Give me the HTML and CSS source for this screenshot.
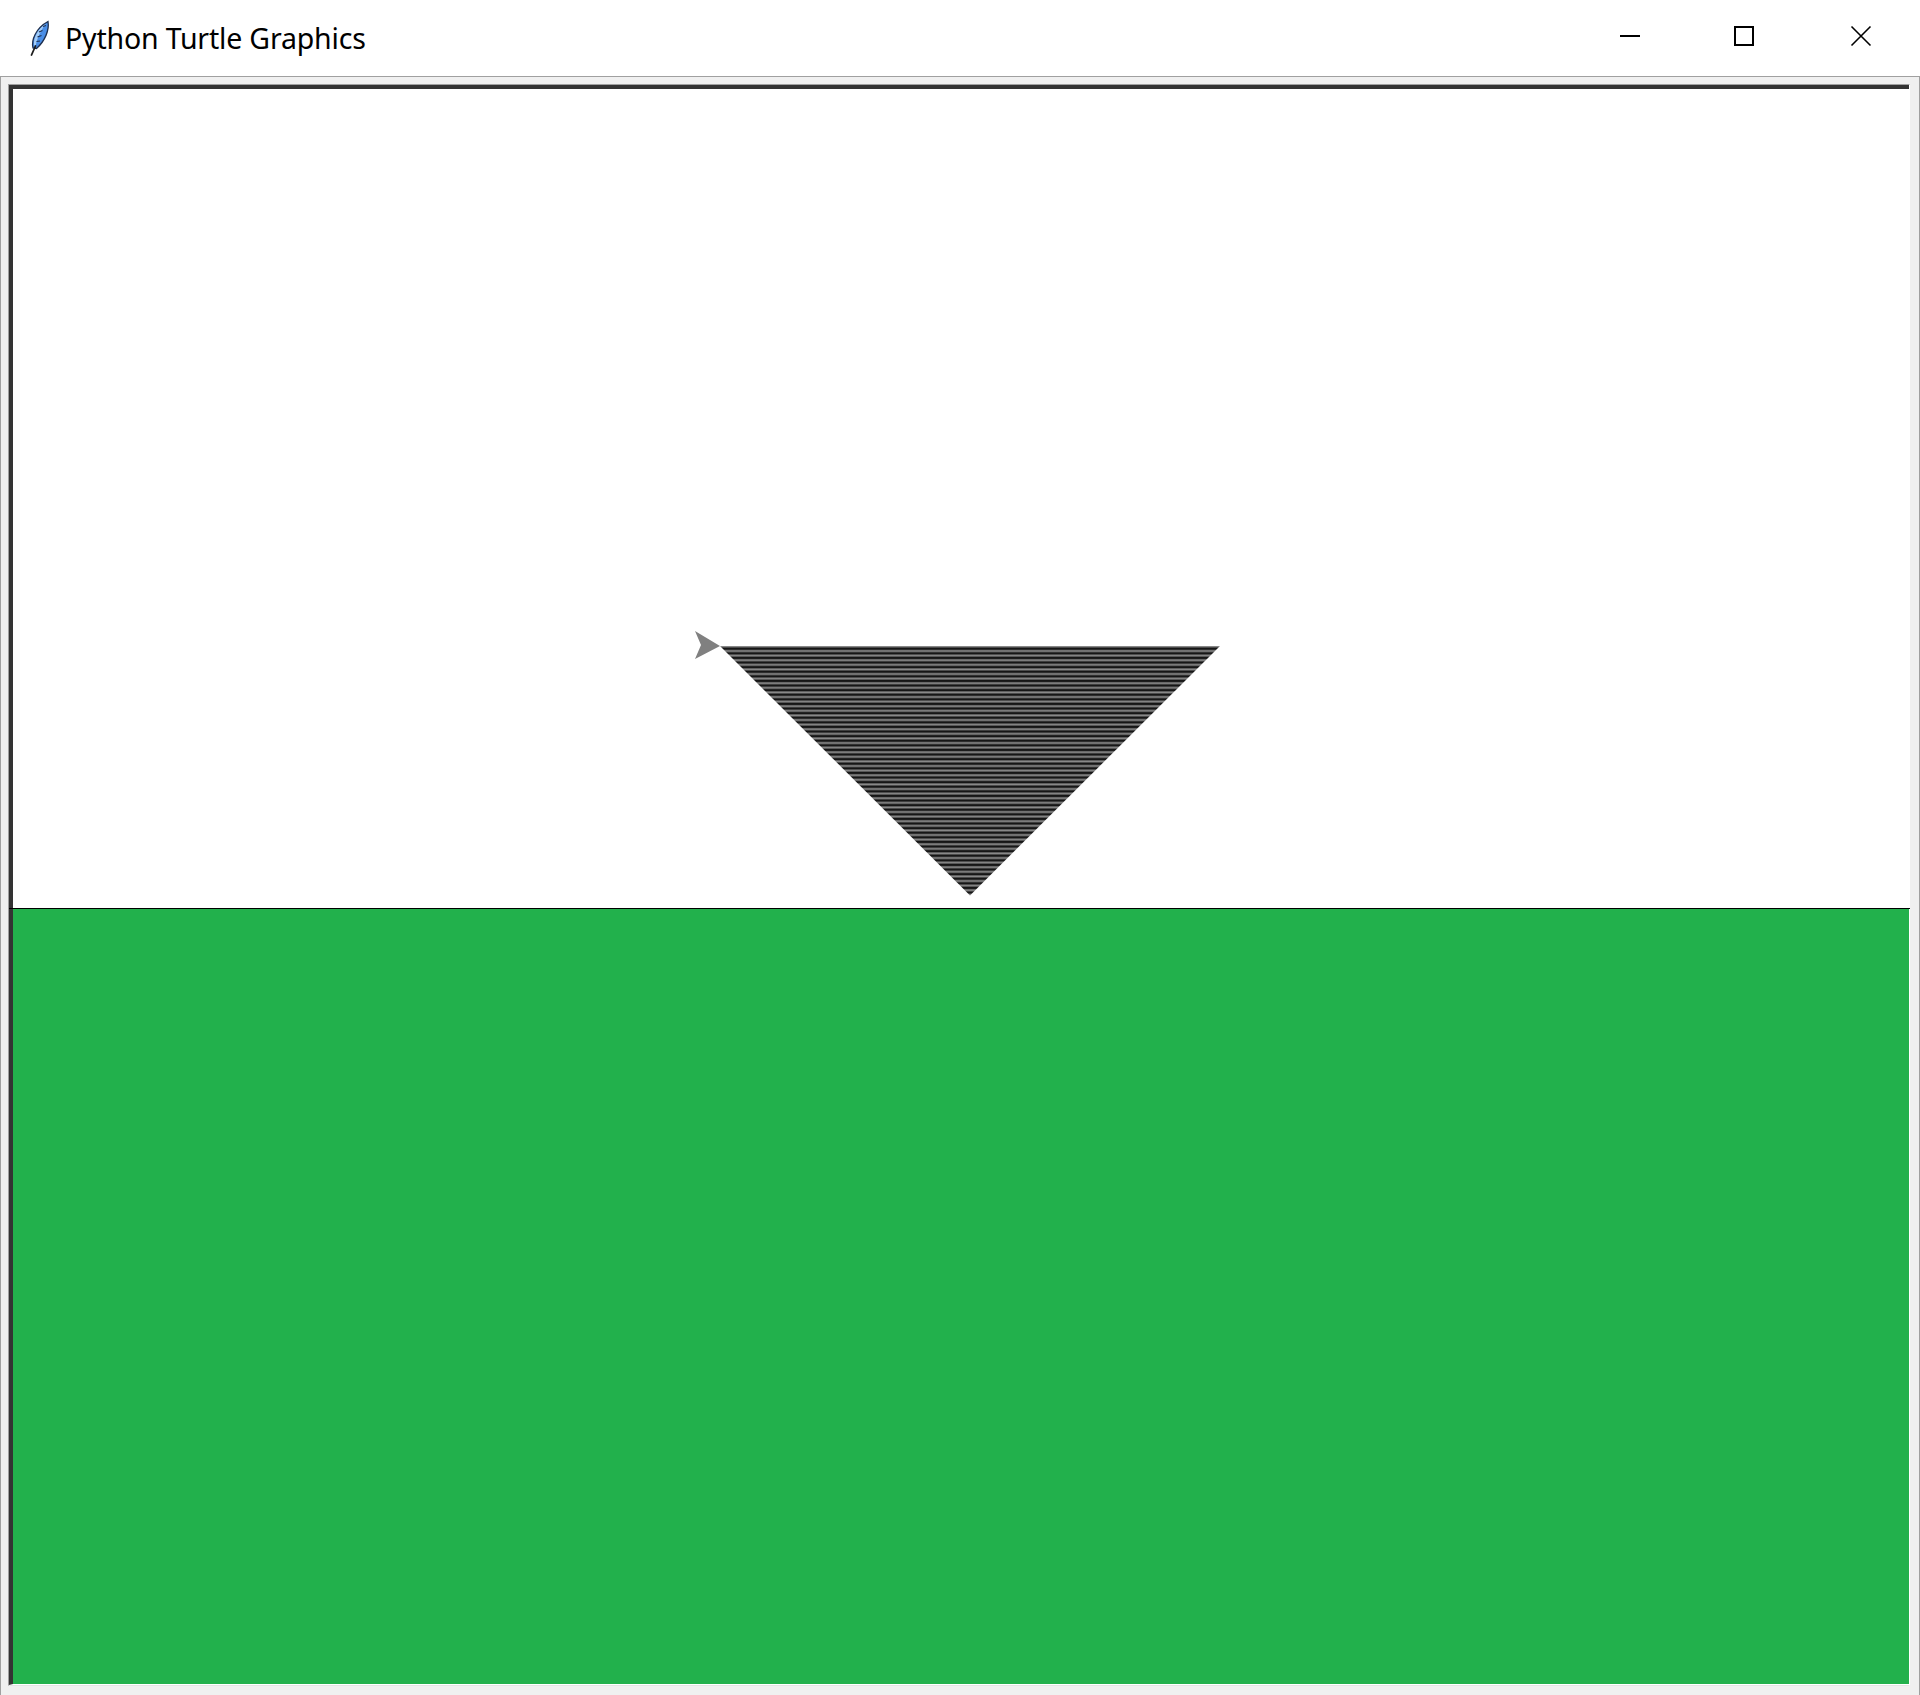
FILE: index.html
```html
<!DOCTYPE html>
<html lang="en">
<head>
<meta charset="utf-8">
<title>Python Turtle Graphics</title>
<link rel="stylesheet" href="styles.css">
</head>
<body>
<div class="window">
  <header class="titlebar">
    <svg class="app-icon" width="22" height="36" viewBox="0 0 22 36" aria-hidden="true">
      <path d="M5 28 C3 20 8 8 20 1.5 C21.5 10 17 21 8.5 28.5 Z" fill="#4a8ee6" stroke="#1e2f4e" stroke-width="1.3"/>
      <path d="M6 25 C5.5 17 10 9 17.5 4 C13 10 9.5 17 7.5 26 Z" fill="#a4cdf8"/>
      <path d="M11 12 L14.5 10.5 M9.5 17 L13.5 15.5 M8.5 21.5 L12 21 M15 6.5 L18 5.5" stroke="#1e2f4e" stroke-width="1.2"/>
      <path d="M7.5 26 L3.5 35" stroke="#1c1c1c" stroke-width="1.8" stroke-linecap="round"/>
    </svg>
    <span class="title">Python Turtle Graphics</span>
    <div class="controls">
      <div class="ctl">
        <svg width="22" height="22" viewBox="0 0 22 22" aria-hidden="true"><path d="M1 11 H21" stroke="#000" stroke-width="2"/></svg>
      </div>
      <div class="ctl">
        <svg width="22" height="22" viewBox="0 0 22 22" aria-hidden="true"><rect x="2" y="2" width="18" height="18" fill="none" stroke="#000" stroke-width="2"/></svg>
      </div>
      <div class="ctl">
        <svg width="22" height="22" viewBox="0 0 22 22" aria-hidden="true"><path d="M1.5 1.5 L20.5 20.5 M20.5 1.5 L1.5 20.5" stroke="#000" stroke-width="1.6"/></svg>
      </div>
    </div>
  </header>
  <main class="client">
    <div class="canvas-outer">
      <div class="canvas-inner">
        <svg class="scene" width="1896" height="1595" viewBox="0 0 1896 1595" aria-hidden="true">
          <defs>
            <pattern id="stripes" patternUnits="userSpaceOnUse" x="0" y="557" width="20" height="4.6">
              <rect x="0" y="0" width="20" height="4.6" fill="#8a8a8a"/>
              <rect x="0" y="1.4" width="20" height="2.6" fill="#161616"/>
            </pattern>
          </defs>
          <rect x="0" y="820" width="1896" height="775" fill="#22b14c"/>
          <line x1="-4" y1="819.5" x2="1897" y2="819.5" stroke="#000" stroke-width="1.2"/>
          <polygon points="707,557 1207,557 957,806.5" fill="url(#stripes)"/>
          <polygon points="707,557 682,542 688,556 682,570" fill="#808080"/>
        </svg>
      </div>
    </div>
  </main>
</div>
</body>
</html>
```

FILE: styles.css
```css
html, body {
  margin: 0;
  padding: 0;
  background: #ffffff;
}

.window {
  width: 1920px;
  height: 1695px;
  display: flex;
  flex-direction: column;
  overflow: hidden;
}

.titlebar {
  height: 76px;
  flex: none;
  display: flex;
  align-items: center;
  background: #ffffff;
  font-family: "Noto Sans", "Open Sans", sans-serif;
}

.app-icon {
  margin-left: 28px;
  margin-top: 0;
  flex: none;
}

.title {
  margin-left: 15px;
  font-size: 28.5px;
  color: #000;
  letter-spacing: -0.18px;
  margin-top: -1px;
}

.controls {
  margin-left: auto;
  display: flex;
  height: 100%;
}

.ctl {
  width: 116px;
  display: flex;
  align-items: center;
  justify-content: center;
  margin-top: -4px;
}

.ctl:last-child {
  width: 118px;
}

.ctl:first-child {
  width: 112px;
}

.client {
  flex: 1;
  background: #f0f0f0;
  border: 1px solid #a0a0a0;
  border-bottom: none;
  padding: 7px 9px 9px 7px;
  display: flex;
  flex-direction: column;
}

.canvas-outer {
  border-left: 1px solid #a0a0a0;
  border-top: 1px solid #a0a0a0;
  border-right: 1px solid #ffffff;
  border-bottom: 1px solid #e3e3e3;
}

.canvas-inner {
  border-left: 4px solid #333333;
  border-top: 4px solid #333333;
  border-bottom: 1px solid #ffffff;
  background: #ffffff;
}

.scene {
  display: block;
  overflow: visible;
}
```
